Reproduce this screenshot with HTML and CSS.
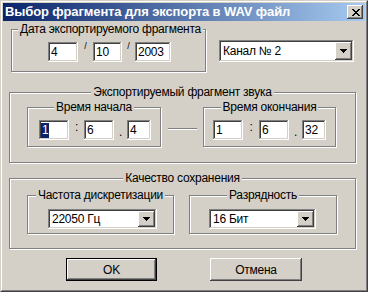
FILE: index.html
```html
<!DOCTYPE html>
<html lang="ru">
<head>
<meta charset="utf-8">
<link rel="stylesheet" href="styles.css">
</head>
<body>
<div class="window">
  <div class="frame">
    <div class="titlebar">
      <span class="title">Выбор фрагмента для экспорта в WAV файл</span>
      <span class="close raised">
        <svg width="8" height="7" viewBox="0 0 8 7"><path d="M0 0h2v1H0z M6 0h2v1H6z M1 1h2v1H1z M5 1h2v1H5z M2 2h4v1H2z M3 3h2v1H3z M2 4h4v1H2z M1 5h2v1H1z M5 5h2v1H5z M0 6h2v1H0z M6 6h2v1H6z" fill="#000"/></svg>
      </span>
    </div>
    <div class="client">
      <div class="row-top">
        <fieldset class="group g-date">
          <legend class="lg-left">Дата экспортируемого фрагмента</legend>
          <div class="fields f-date">
            <div class="edit sunken w30">4</div>
            <span class="slash w15">/</span>
            <div class="edit sunken w29">10</div>
            <span class="slash w13">/</span>
            <div class="edit sunken w36">2003</div>
          </div>
        </fieldset>
        <div class="combo sunken c-channel">
          <span class="combo-val">Канал № 2</span>
          <span class="drop raised"><svg width="7" height="4" viewBox="0 0 7 4"><path d="M0 0h7v1H0z M1 1h5v1H1z M2 2h3v1H2z M3 3h1v1H3z" fill="#000"/></svg></span>
        </div>
      </div>

      <fieldset class="group g-outer g-export">
        <legend>Экспортируемый фрагмент звука</legend>
        <div class="inner-row">
          <fieldset class="group g-time g-start">
            <legend>Время начала</legend>
            <div class="fields f-start">
              <div class="edit sunken w30"><span class="sel">1</span></div>
              <span class="colon w15">:</span>
              <div class="edit sunken w30">6</div>
              <span class="dot w13">.</span>
              <div class="edit sunken w24">4</div>
            </div>
          </fieldset>
          <div class="dash-area"><div class="dash"></div></div>
          <fieldset class="group g-time g-end">
            <legend>Время окончания</legend>
            <div class="fields f-end">
              <div class="edit sunken w30">1</div>
              <span class="colon w16">:</span>
              <div class="edit sunken w30">6</div>
              <span class="dot w13">.</span>
              <div class="edit sunken w24">32</div>
            </div>
          </fieldset>
        </div>
      </fieldset>

      <fieldset class="group g-outer g-quality">
        <legend>Качество сохранения</legend>
        <div class="inner-row">
          <fieldset class="group g-q g-rate">
            <legend>Частота дискретизации</legend>
            <div class="fields f-rate">
              <div class="combo sunken c-rate">
                <span class="combo-val">22050 Гц</span>
                <span class="drop raised"><svg width="7" height="4" viewBox="0 0 7 4"><path d="M0 0h7v1H0z M1 1h5v1H1z M2 2h3v1H2z M3 3h1v1H3z" fill="#000"/></svg></span>
              </div>
            </div>
          </fieldset>
          <fieldset class="group g-q g-bits">
            <legend>Разрядность</legend>
            <div class="fields f-bits">
              <div class="combo sunken c-bits">
                <span class="combo-val">16 Бит</span>
                <span class="drop raised"><svg width="7" height="4" viewBox="0 0 7 4"><path d="M0 0h7v1H0z M1 1h5v1H1z M2 2h3v1H2z M3 3h1v1H3z" fill="#000"/></svg></span>
              </div>
            </div>
          </fieldset>
        </div>
      </fieldset>

      <div class="buttons">
        <span class="btn btn-default raised b-ok">OK</span>
        <span class="btn raised b-cancel">Отмена</span>
      </div>
    </div>
  </div>
</div>
</body>
</html>
```
FILE: styles.css
```css
* { box-sizing: border-box; }
html, body { margin: 0; padding: 0; }
body {
  width: 368px;
  height: 292px;
  background: #d4d0c8;
  font-family: "Liberation Sans", Arial, sans-serif;
  font-size: 12px;
  letter-spacing: -0.25px;
  color: #000;
  overflow: hidden;
}
.window {
  width: 368px;
  height: 292px;
  border: 1px solid;
  border-color: #d4d0c8 #404040 #404040 #d4d0c8;
  background: #d4d0c8;
}
.frame {
  height: 100%;
  border: 1px solid;
  border-color: #fff #808080 #808080 #fff;
  padding: 1px;
  display: flex;
  flex-direction: column;
}
.titlebar {
  height: 18px;
  flex: none;
  display: flex;
  align-items: center;
  padding-left: 2px;
  background: linear-gradient(to right, #0a246a, #a6caf0);
}
.title {
  flex: 1;
  color: #fff;
  font-weight: bold;
  font-size: 13px;
  letter-spacing: -0.12px;
  line-height: 18px;
  white-space: nowrap;
}
.raised {
  background: #d4d0c8;
  box-shadow: inset -1px -1px #404040, inset 1px 1px #fff, inset -2px -2px #808080, inset 2px 2px #d4d0c8;
}
.sunken {
  background: #fff;
  box-shadow: inset -1px -1px #fff, inset 1px 1px #808080, inset -2px -2px #d4d0c8, inset 2px 2px #404040;
}
.close {
  width: 16px;
  height: 14px;
  margin-right: 2px;
  display: flex;
  align-items: center;
  justify-content: center;
  padding-left: 1px;
}
.close svg { display: block; }

.client {
  flex: 1;
  display: flex;
  flex-direction: column;
}

/* group boxes */
.group {
  margin: 0;
  padding: 0;
  min-width: 0;
  border: 1px solid #808080;
  box-shadow: 1px 1px 0 #fff, inset 1px 1px 0 #fff;
}
.group legend {
  padding: 0 2px;
  margin: 0 auto;
  line-height: 13px;
  background: #d4d0c8;
  white-space: nowrap;
}
.group legend.lg-left { margin: 0 0 0 6px; }

.fields {
  display: flex;
  align-items: flex-start;
}

.row-top {
  display: flex;
  align-items: flex-start;
  margin-top: 2px;
  padding-left: 8px;
}
.g-date { width: 195px; height: 49px; }
.f-date { padding: 6px 0 0 36px; }

.c-channel {
  margin: 17px 0 0 13px;
  width: 135px;
  height: 22px;
}

.g-outer { width: 347px; height: 77px; margin-left: 6px; }
.g-export { margin-top: 14px; }
.g-quality { margin-top: 9px; }
.inner-row {
  display: flex;
  align-items: flex-start;
  padding-left: 17px;
}
.g-export .inner-row { padding-top: 2px; }
.g-quality .inner-row { padding-top: 4px; gap: 15px; }

.g-time { height: 46px; }
.g-start { width: 134px; }
.g-end { width: 133px; }
.f-start { padding: 6px 0 0 11px; }
.f-end { padding: 6px 0 0 9px; }

.dash-area {
  width: 42px;
  padding: 27px 6px 0 7px;
}
.dash {
  height: 2px;
  border-top: 1px solid #808080;
  border-bottom: 1px solid #fff;
}

.g-q { height: 45px; }
.g-rate { width: 147px; }
.g-bits { width: 148px; }
.f-rate { padding: 7px 0 0 20px; }
.f-bits { padding: 7px 0 0 19px; }
.c-rate { width: 109px; height: 20px; }
.c-bits { width: 107px; height: 20px; }

/* edits */
.edit {
  height: 20px;
  padding: 0 3px;
  line-height: 20px;
  white-space: nowrap;
  overflow: hidden;
}
.w24 { width: 24px; flex: none; }
.w29 { width: 29px; flex: none; }
.w30 { width: 30px; flex: none; }
.w36 { width: 36px; flex: none; }
.w13 { width: 13px; flex: none; }
.w15 { width: 15px; flex: none; }
.w16 { width: 16px; flex: none; }

.sel {
  background: #0a246a;
  color: #fff;
  display: inline-block;
  line-height: 15px;
  padding: 0 1px;
  margin-left: -1px;
}
.slash {
  text-align: center;
  font-size: 9px;
  line-height: 8px;
}
.colon {
  text-align: center;
  line-height: 15px;
}
.dot {
  text-align: center;
  line-height: 13px;
  padding-top: 6px;
}

/* combos */
.combo {
  display: flex;
  align-items: stretch;
  padding: 2px;
}
.combo-val {
  flex: 1;
  padding-left: 2px;
  display: flex;
  align-items: center;
  white-space: nowrap;
}
.drop {
  width: 17px;
  flex: none;
  display: flex;
  align-items: center;
  justify-content: center;
}
.drop svg { display: block; }

/* buttons */
.buttons {
  display: flex;
  margin-top: 9px;
  padding-left: 63px;
}
.btn {
  height: 23px;
  display: flex;
  align-items: center;
  justify-content: center;
}
.btn-default {
  border: 1px solid #000;
}
.b-ok { width: 91px; }
.b-cancel { width: 92px; margin-left: 53px; }
```
